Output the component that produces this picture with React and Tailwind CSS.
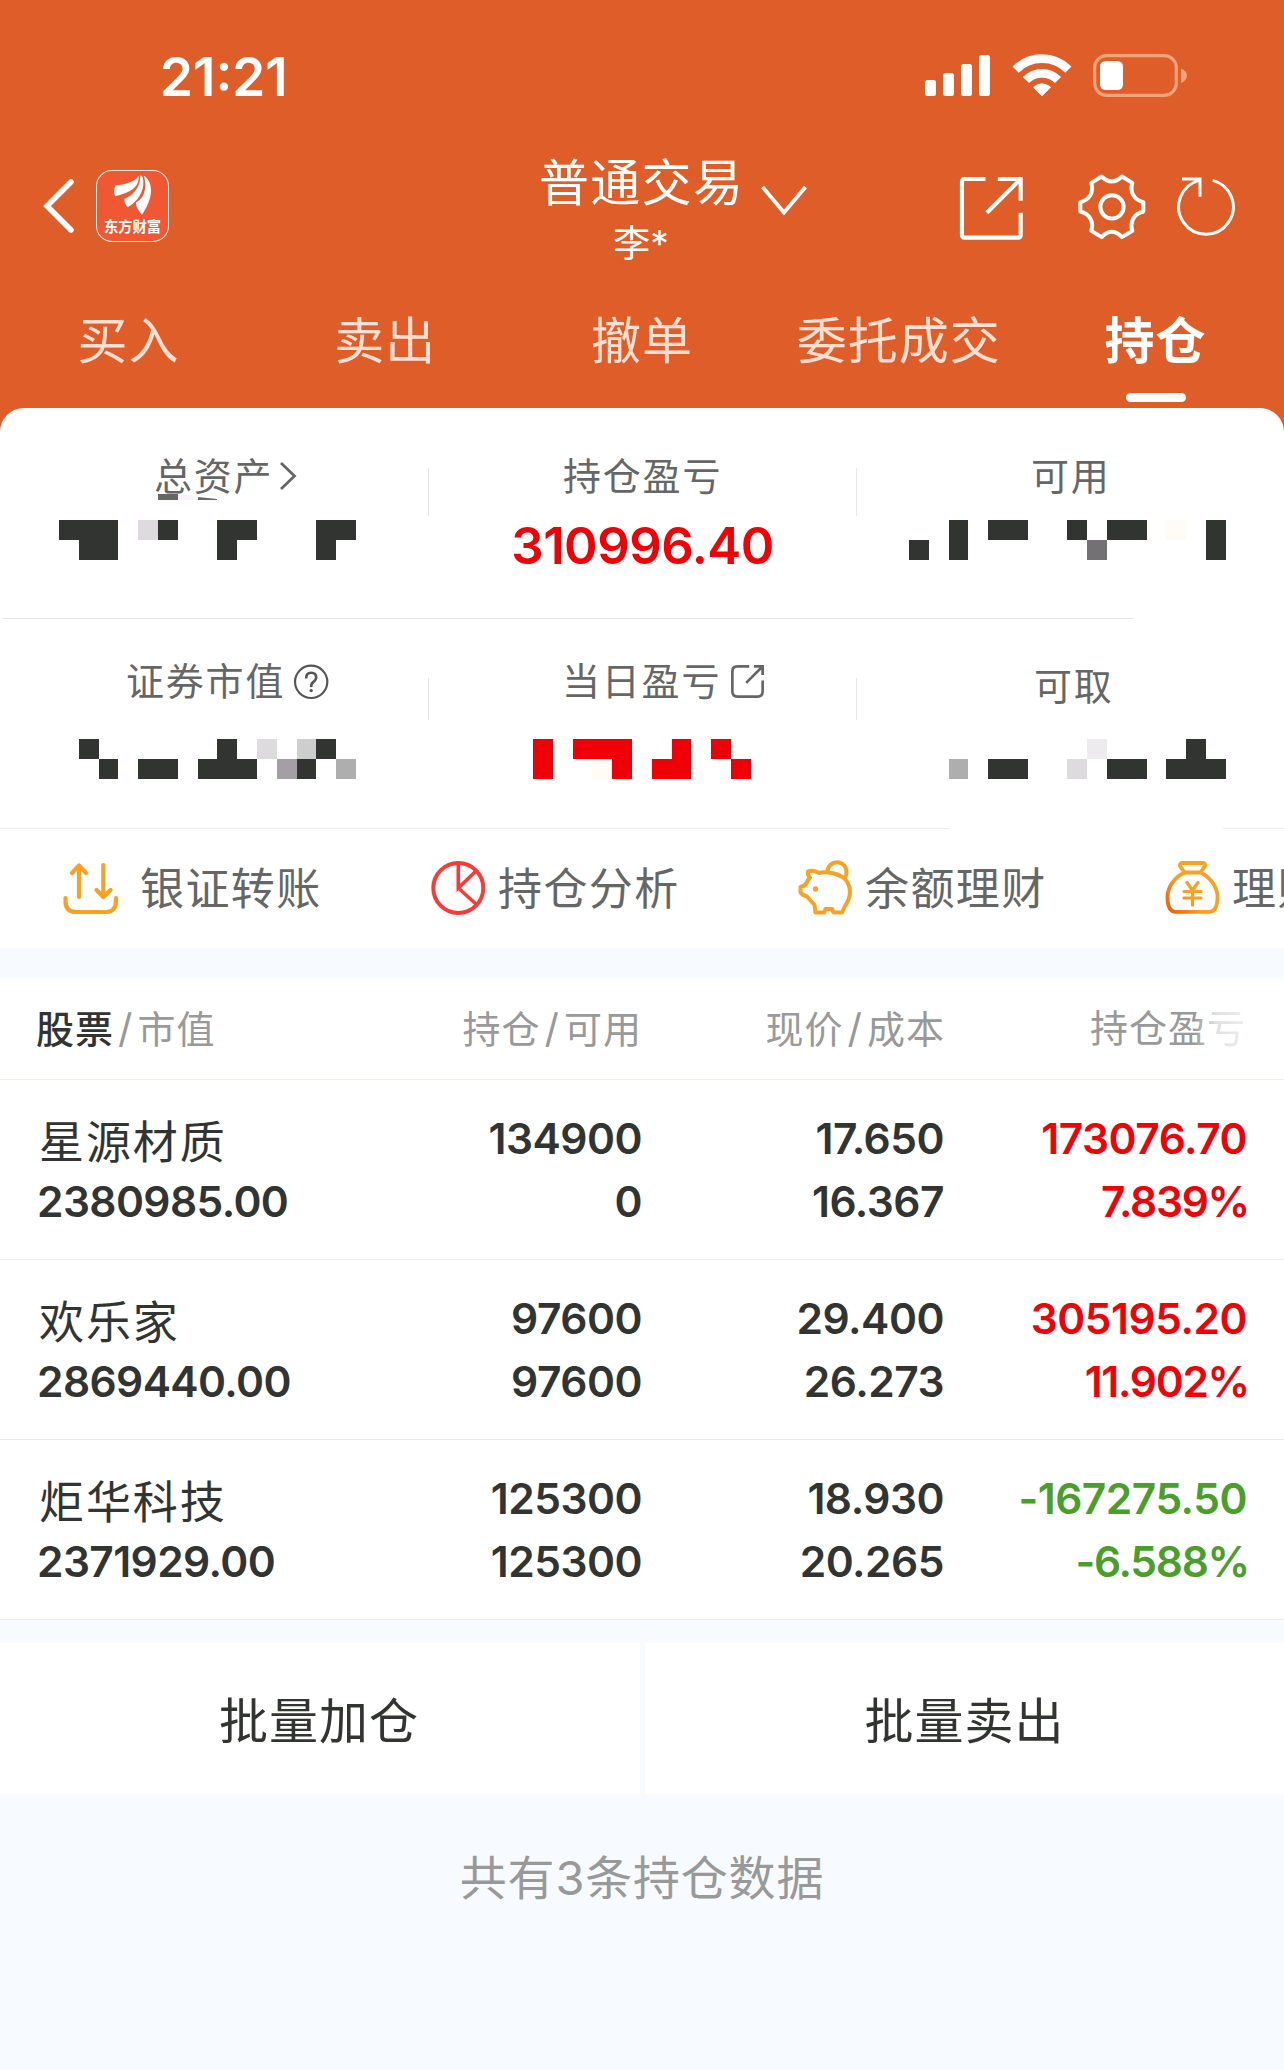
const TABS = ['买入', '卖出', '撤单', '委托成交', '持仓'];

const HOLDINGS = [
  { name: '星源材质', value: '2380985.00', qty: '134900', usable: '0', price: '17.650', cost: '16.367', profit: '173076.70', rate: '7.839%', color: 'text-[#f20006]' },
  { name: '欢乐家', value: '2869440.00', qty: '97600', usable: '97600', price: '29.400', cost: '26.273', profit: '305195.20', rate: '11.902%', color: 'text-[#f20006]' },
  { name: '炬华科技', value: '2371929.00', qty: '125300', usable: '125300', price: '18.930', cost: '20.265', profit: '-167275.50', rate: '-6.588%', color: 'text-[#4a9e2a]' },
];

// one letter per mosaic cell
const CELL_COLORS = {
  '.': 'bg-transparent',
  d: 'bg-[#323431]',
  g: 'bg-[#747174]',
  h: 'bg-[#a3a0a4]',
  m: 'bg-[#aeaeae]',
  c: 'bg-[#cecece]',
  l: 'bg-[#dddbde]',
  p: 'bg-[#eeebef]',
  w: 'bg-[#fffbf5]',
  r: 'bg-[#ef0008]',
};

function Mosaic({ rows, className = '' }) {
  return (
    <div className={className}>
      {rows.map((row, i) => (
        <div key={i} className="flex">
          {row.split('').map((c, j) => (
            <span key={j} className={`h-5 w-[19.8px] ${CELL_COLORS[c]}`} />
          ))}
        </div>
      ))}
    </div>
  );
}

function StatusBar() {
  return (
    <div className="flex h-[150px] items-start pl-[160px] text-white">
      <span className="mt-[45px] w-[132px] text-[53px] leading-[64px] font-semibold whitespace-nowrap">21:21</span>
      <svg className="mt-[55px] ml-[633px] h-[41px] w-[65px]" viewBox="0 0 65 41" fill="#fff">
        <rect x="0" y="25" width="11" height="16" rx="2.5" />
        <rect x="18" y="18" width="11" height="23" rx="2.5" />
        <rect x="36" y="9" width="11" height="32" rx="2.5" />
        <rect x="54" y="0" width="11" height="41" rx="2.5" />
      </svg>
      <svg className="mt-[52px] ml-[22px] h-[46px] w-[60px]" viewBox="395 65 180 138" fill="none" stroke="#fff" strokeWidth="26">
        <path d="M405.8 117.8A112 112 0 0 1 564.2 117.8M436.9 148.9A68 68 0 0 1 533.1 148.9" />
        <path d="M485 197L459 171A37 37 0 0 1 511 171Z" fill="#fff" strokeWidth="2" />
      </svg>
      <svg className="mt-[54px] ml-[21px] h-[43px] w-[95px]" viewBox="0 0 95 43" fill="none">
        <rect x="1.7" y="1.7" width="81.6" height="39.6" rx="12" stroke="#f0a37c" strokeWidth="3.2" />
        <rect x="7" y="7" width="23" height="29" rx="5.5" fill="#fff" />
        <path d="M88 14.5Q94 17 94 21.5T88 29Z" fill="#f0a37c" />
      </svg>
    </div>
  );
}

function AppLogo() {
  return (
    <div className="flex h-[72px] w-[73px] flex-col items-center rounded-[16px] border-[1.5px] border-white/90 bg-[#f05733]">
      <svg className="mt-[3px] h-[42px] w-[42px]" viewBox="332 464 126 126" fill="#fff">
        <path d="M411 470C398 490 370 495 343 498C338 508 337 520 341 531C380 522 414 508 412 471Z" />
        <path d="M417 468C418 505 395 528 369 539C368 550 374 556 379 564C405 548 434 518 424 472Z" />
        <path d="M428 470C440 515 422 540 404 549C402 562 415 578 422 586C444 555 466 500 430 470Z" />
      </svg>
      <span className="mt-[3px] text-[14.3px] leading-[16px] font-bold whitespace-nowrap text-white">东方财富</span>
    </div>
  );
}

function TitleBar() {
  return (
    <div className="flex h-[140px] items-start text-white">
      <svg className="mt-[29px] ml-[43px] h-[54px] w-[31px]" viewBox="0 0 31 54" fill="none" stroke="#fff" strokeWidth="5.5" strokeLinecap="round">
        <path d="M28 3L4 27L28 51" />
      </svg>
      <div className="mt-[20px] ml-[22px]">
        <AppLogo />
      </div>
      <div className="ml-[370px] w-[204px] text-center">
        <div className="mt-[3px] text-[50px] leading-[60px] tracking-[1.3px] whitespace-nowrap">普通交易</div>
        <div className="mt-[11px] text-[37px] leading-[40px]">李*</div>
      </div>
      <svg className="mt-[35px] ml-[18px] h-[31px] w-[46px]" viewBox="0 0 46 31" fill="none" stroke="#fff" strokeWidth="3.8">
        <path d="M1.5 2L23 27.5L44.5 2" />
      </svg>
      <svg className="mt-[25px] ml-[151px] h-[67px] w-[67px]" viewBox="234 435 202 202" fill="none" stroke="#fff" strokeWidth="12.5">
        <path d="M317 447H254Q246 447 246 455V616Q246 624 254 624H415Q423 624 423 616V549M354 447H423V513M421 449L321 549" />
      </svg>
      <svg className="mt-[23px] ml-[52px] h-[67px] w-[70px]" viewBox="590 430 210 200" fill="none" stroke="#fff" strokeWidth="12" strokeLinejoin="round">
        <path d="M664 440Q694 470 725 440L756 459C748 485 760 510 789 517V545C760 552 748 577 756 603L725 622Q694 590 664 622L633 603C641 577 629 552 600 545V517C629 510 641 485 633 459Z" />
        <circle cx="695" cy="531" r="35" />
      </svg>
      <svg className="mt-[25px] ml-[29px] h-[61px] w-[62px]" viewBox="885 438 186 183" fill="none" stroke="#fff" strokeWidth="9">
        <path d="M995 454A82 82 0 1 1 955 454M903 450H957V503" />
      </svg>
    </div>
  );
}

function Tabs() {
  return (
    <div className="grid h-[118px] grid-cols-5">
      {TABS.map((tab) => {
        const active = tab === '持仓';
        return (
          <div
            key={tab}
            className={`flex flex-col items-center text-[50px] leading-[60px] tracking-[1px] whitespace-nowrap ${
              active ? 'font-bold text-white' : 'text-[#fedfd3]'
            }`}
          >
            <span className="mt-[21px]">{tab}</span>
            {active && <span className="mt-[22px] h-[9px] w-[60px] rounded-full bg-white" />}
          </div>
        );
      })}
    </div>
  );
}

function HelpIcon() {
  return (
    <svg className="h-[37px] w-[37px]" viewBox="880 668 110 110" fill="none" stroke="#555" strokeWidth="6.5">
      <circle cx="934" cy="724" r="48" />
      <path d="M919 714Q919 697 934 697T949 711Q949 718 941 724T934 740" strokeWidth="8" />
      <circle cx="934" cy="750" r="5" fill="#555" stroke="none" />
    </svg>
  );
}

function OpenIcon() {
  return (
    <svg className="h-[37px] w-[37px]" viewBox="896 668 110 110" fill="none" stroke="#666" strokeWidth="8">
      <path d="M956 678H921Q906 678 906 693V753Q906 768 921 768H981Q996 768 996 753V720M970 678H996V704M994 680L947 727" />
    </svg>
  );
}

function Summary() {
  const label = 'flex items-center text-[38px] leading-[48px] tracking-[1.8px] whitespace-nowrap text-[#666]';
  return (
    <div>
      <div className="relative flex h-[210px]">
        <div className="w-[428px] pt-[44px]">
          <div className={`${label} pl-[154px]`}>
            总资产
            <svg className="ml-[6px] h-[30px] w-[18px]" viewBox="0 0 18 30" fill="none" stroke="#666" strokeWidth="2.8">
              <path d="M2 2L15.5 15L2 28" />
            </svg>
          </div>
          <Mosaic className="mt-[20px] ml-[59px]" rows={['ddd.ld..dd...dd', '.dd.....d....d.']} />
          <svg className="absolute top-[86px] left-[158px] h-[6px] w-[60px]" viewBox="0 0 60 6">
            <path d="M0 0H20V6H0Z" fill="#666865" />
            <path d="M20 1H40V6H20Z" fill="#f7f3f6" />
            <path d="M40 3L59 5V6H40Z" fill="#666865" />
          </svg>
        </div>
        <div className="mt-[60px] h-[48px] w-px bg-[#e6e6e6]" />
        <div className="w-[427px] pt-[44px]">
          <div className={`${label} pl-[134px]`}>持仓盈亏</div>
          <div className="mt-[16px] text-center text-[51px] leading-[60px] font-semibold tracking-[-0.6px] text-[#f20006]">310996.40</div>
        </div>
        <div className="mt-[60px] h-[48px] w-px bg-[#e6e6e6]" />
        <div className="flex-1 pt-[44px]">
          <div className={`${label} pl-[174px]`}>可用</div>
          <Mosaic className="mt-[20px] ml-[52px]" rows={['..d.dd..d.dd.w.d', 'd.d......g.....d']} />
        </div>
        <div className="absolute bottom-0 left-[3px] h-px w-[1130px] translate-y-px bg-[#e8e7e8]" />
      </div>
      <div className="relative flex h-[210px]">
        <div className="w-[428px] pt-[39px]">
          <div className={`${label} pl-[126px]`}>
            证券市值
            <span className="ml-[8px]"><HelpIcon /></span>
          </div>
          <Mosaic className="mt-[34px] ml-[59px]" rows={['.d......d.l.cd.', '..d.dd.ddd.hd.m']} />
        </div>
        <div className="mt-[60px] h-[42px] w-px bg-[#e6e6e6]" />
        <div className="w-[427px] pt-[39px]">
          <div className={`${label} pl-[133px]`}>
            当日盈亏
            <span className="ml-[8px]"><OpenIcon /></span>
          </div>
          <Mosaic className="mt-[34px] ml-[104px]" rows={['r.rrr..r.r.', 'r..wr.rr..r']} />
        </div>
        <div className="mt-[60px] h-[42px] w-px bg-[#e6e6e6]" />
        <div className="flex-1 pt-[44px]">
          <div className={`${label} pl-[177px]`}>可取</div>
          <Mosaic className="mt-[29px] ml-[52px]" rows={['.........p....d.', '..m.dd..l.dd.ddd']} />
        </div>
        <div className="absolute bottom-0 left-0 h-px w-[949px] translate-y-px bg-[#eeebec]" />
        <div className="absolute right-0 bottom-0 h-px w-[61px] translate-y-px bg-[#eeebec]" />
      </div>
    </div>
  );
}

function Shortcuts() {
  return (
    <div className="flex h-[120px] w-[1284px] items-center overflow-hidden text-[44px] leading-[56px] tracking-[1.4px] whitespace-nowrap text-[#666]">
      <div className="ml-[61px] flex w-[368px] shrink-0 items-center">
        <svg className="h-[56px] w-[59px]" viewBox="61 19 59 56" fill="none" stroke="#f9a123" strokeWidth="4.2" strokeLinecap="round" strokeLinejoin="round">
          <path d="M79 56V25M72 32L79 24.5L86 32M103.3 24V56M96.5 49L103.3 56L110.5 49" />
          <path d="M65.5 57V60C65.5 67 69 71 76 71H106C112.5 71 116 67 116 60V57" />
        </svg>
        <span className="mt-[2px] ml-[20px]">银证转账</span>
      </div>
      <div className="flex w-[368px] shrink-0 items-center">
        <svg className="h-[58px] w-[58px]" viewBox="429 19 58 58" fill="none" stroke="#fb3a36" strokeWidth="4">
          <circle cx="458.3" cy="48" r="25" />
          <path d="M458.3 23V48L476.5 30.5M458.3 48L476.5 64.5" strokeWidth="3.6" />
        </svg>
        <span className="mt-[2px] ml-[11px]">持仓分析</span>
      </div>
      <div className="flex w-[367px] shrink-0 items-center">
        <svg className="h-[58px] w-[58px]" viewBox="154 19 58 58" fill="none" stroke="#f9a123" strokeWidth="4" strokeLinejoin="round">
          <path d="M165 31.5Q171 29.5 176 33C184 31 196 33.5 202 39C209 47 208 58 202 66L199 72.5H190.5L189 69H182.5L181 72.5H172.5L171.5 65L164 56.5Q158.5 55 157.5 52V47Q162 46 163.5 43Q164.5 40 167 37.5Q164 34.5 165 31.5Z" />
          <path d="M184.5 31A9.5 9.5 0 0 1 203.5 32.5Q203.5 36 201.5 38.5" />
          <circle cx="172.5" cy="49" r="2.7" fill="#f9a123" stroke="none" />
        </svg>
        <span className="mt-[2px] ml-[10px]">余额理财</span>
      </div>
      <div className="flex shrink-0 items-center">
        <svg className="h-[58px] w-[58px]" viewBox="521 19 58 58" fill="none" stroke="url(#bag)" strokeWidth="3.8" strokeLinejoin="round" strokeLinecap="round">
          <defs>
            <linearGradient id="bag" gradientUnits="userSpaceOnUse" x1="525" y1="72" x2="546" y2="55">
              <stop offset="0" stopColor="#ee5a0c" />
              <stop offset="1" stopColor="#f9a123" />
            </linearGradient>
          </defs>
          <path d="M541.5 32.5H557.5C567 37 574.5 47 574.5 57C574.5 68 571 71.8 566 71.8H533C527 71.8 524.5 66 524.5 57C524.5 47 532 37 541.5 32.5Z" />
          <path d="M541.5 32.5L537 26Q536.5 23 539.5 23H560Q562.5 23 562 26L557.5 32.5" />
          <path d="M544 42.5L549.5 50.5L555 42.5M549.5 50.5V65M541 51.5H558M541 58H558" strokeWidth="3.2" />
        </svg>
        <span className="mt-[2px] ml-[10px]">理财</span>
      </div>
    </div>
  );
}

function Pair({ a, b, className = '' }) {
  return (
    <div className={`text-right text-[42.5px] leading-[63px] font-semibold tracking-[-0.5px] ${className}`}>
      <div>{a}</div>
      <div className={b.endsWith('%') ? '-mr-[2px] tracking-[-1.3px]' : ''}>{b}</div>
    </div>
  );
}

function Holdings() {
  return (
    <div className="bg-white">
      <div className="relative flex h-[102px] items-center border-b border-[#f3ece8] pl-[36px] text-[38px] tracking-[1px] whitespace-nowrap text-[#999]">
        <div className="w-[301px]">
          <span className="font-medium text-[#323431]">股票</span>
          <span className="mx-[4px] text-[40px]">/</span>市值
        </div>
        <div className="w-[305px] text-right">持仓<span className="mx-[4px] text-[40px]">/</span>可用</div>
        <div className="w-[303px] text-right">现价<span className="mx-[4px] text-[40px]">/</span>成本</div>
        <div className="w-[301px] text-right">持仓盈亏</div>
        <div className="absolute top-0 right-0 h-[100px] w-[90px] bg-linear-to-r from-transparent via-white/70 via-25% to-white" />
      </div>
      {HOLDINGS.map((h) => (
        <div key={h.name} className="flex h-[180px] border-b border-[#ebebeb] pt-[27px] pl-[37px] text-[#323431]">
          <div className="w-[300px]">
            <div className="h-[63px] pt-[4px] pl-[2px] text-[45px] leading-[63px] tracking-[1.9px]">{h.name}</div>
            <div className="text-[42.5px] leading-[63px] font-semibold tracking-[-0.6px]">{h.value}</div>
          </div>
          <Pair a={h.qty} b={h.usable} className="w-[305px]" />
          <Pair a={h.price} b={h.cost} className="w-[302px]" />
          <Pair a={h.profit} b={h.rate} className={`w-[303px] ${h.color}`} />
        </div>
      ))}
    </div>
  );
}

export default function App() {
  return (
    <div className="min-h-[2070px] w-[1284px] overflow-hidden bg-[#f7faff] font-[Inter,'Noto_Sans_CJK_SC',sans-serif]">
      <div className="bg-[#df5d29]">
        <StatusBar />
        <TitleBar />
        <Tabs />
        <div className="rounded-t-[24px] bg-white">
          <Summary />
          <Shortcuts />
        </div>
      </div>
      <div className="h-[30px]" />
      <Holdings />
      <div className="mt-[23px] flex h-[151px] gap-[5px] text-[49px] tracking-[1px] text-[#323431]">
        <div className="flex w-[640px] items-center justify-center bg-white pt-[6px] pr-[2px]">批量加仓</div>
        <div className="flex flex-1 items-center justify-center bg-white pt-[6px]">批量卖出</div>
      </div>
      <div className="mt-[51px] text-center text-[47px] leading-[66px] tracking-[0.8px] text-[#999]">共有3条持仓数据</div>
    </div>
  );
}
